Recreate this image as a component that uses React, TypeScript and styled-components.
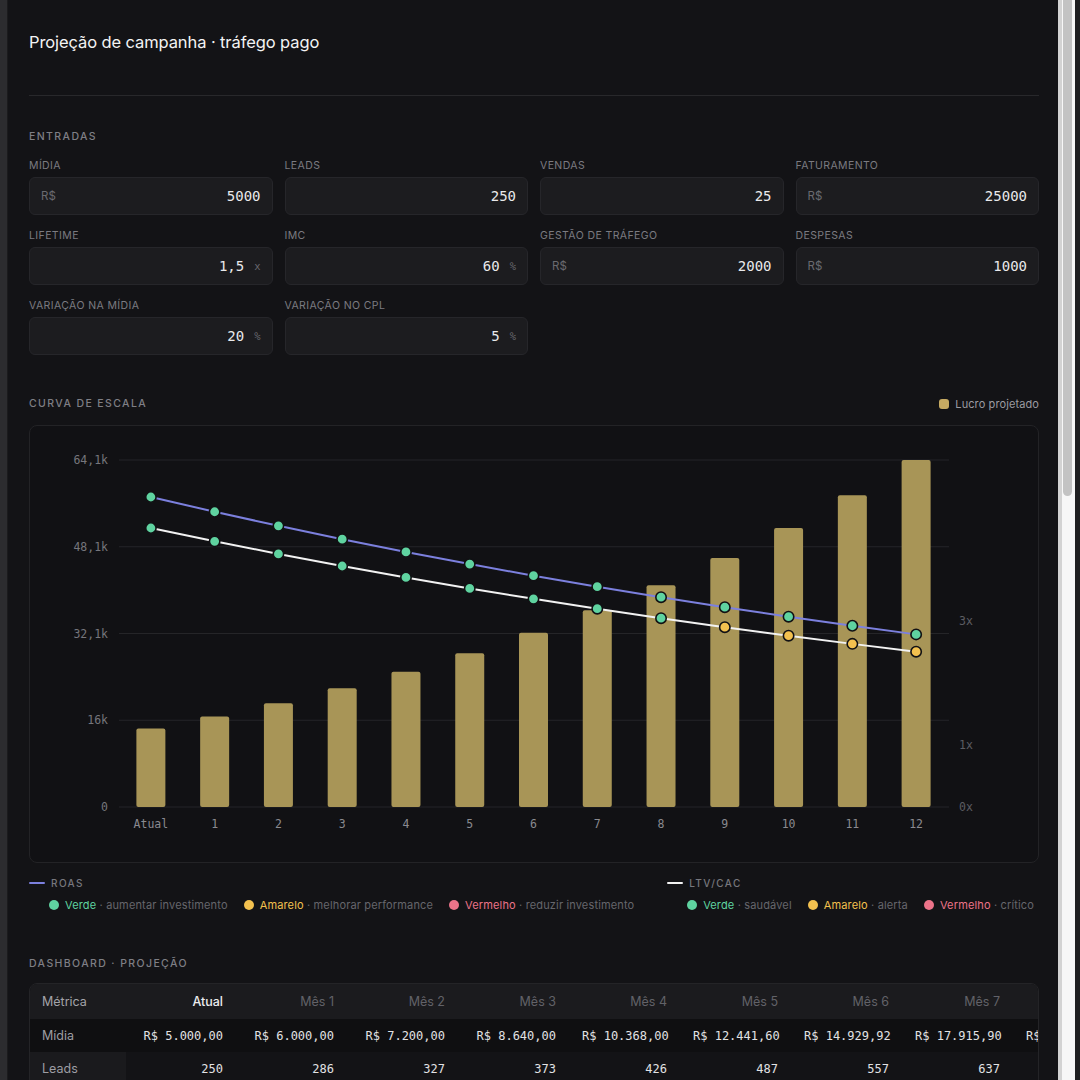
import React from 'react'
import styled, { createGlobalStyle } from 'styled-components'

const SANS = `Inter, 'Liberation Sans', sans-serif`
const MONO = `'DejaVu Sans Mono', 'Liberation Mono', monospace`

const GREEN = '#5fd3a0'
const YELLOW = '#f3c14f'
const RED = '#ec7389'
const BLUE = '#7c80de'
const GOLD = '#a89557'

const GlobalStyle = createGlobalStyle`
  html, body {
    margin: 0;
    padding: 0;
    overflow: hidden;
    background: #2b2b2e;
  }
  body {
    font-family: ${SANS};
  }
  * {
    box-sizing: border-box;
  }
`

// base inputs
const inputs = {
  midia: 5000,
  leads: 250,
  vendas: 25,
  faturamento: 25000,
  lifetime: 1.5,
  imc: 60,
  gestao: 2000,
  despesas: 1000,
  varMidia: 20,
  varCpl: 5,
}

type Month = {
  label: string
  midia: number
  leads: number
  cpl: number
  vendas: number
  faturamento: number
  lucro: number
  roas: number
  ltvCac: number
}

function project(): Month[] {
  const cpl0 = inputs.midia / inputs.leads
  const conv = inputs.vendas / inputs.leads
  const ticket = inputs.faturamento / inputs.vendas
  const ltv = ticket * inputs.lifetime * (inputs.imc / 100)
  const out: Month[] = []
  for (let n = 0; n <= 12; n++) {
    const midia = inputs.midia * Math.pow(1 + inputs.varMidia / 100, n)
    const cpl = cpl0 * Math.pow(1 + inputs.varCpl / 100, n)
    const leads = midia / cpl
    const vendas = leads * conv
    const faturamento = vendas * ticket
    const lucro = faturamento * inputs.lifetime * (inputs.imc / 100) - midia - inputs.gestao - inputs.despesas
    out.push({
      label: n === 0 ? 'Atual' : String(n),
      midia,
      leads,
      cpl,
      vendas,
      faturamento,
      lucro,
      roas: faturamento / midia,
      ltvCac: ltv / (midia / vendas),
    })
  }
  return out
}

const months = project()
const tableMonths = months.slice(0, 9)

function brNumber(v: number, digits: number) {
  const [int, dec] = v.toFixed(digits).split('.')
  const grouped = int.replace(/\B(?=(\d{3})+(?!\d))/g, '.')
  return dec ? `${grouped},${dec}` : grouped
}
const brl = (v: number) => `R$ ${brNumber(v, 2)}`
const kLabel = (v: number) => {
  if (v === 0) return '0'
  const s = (v / 1000).toFixed(1).replace('.', ',')
  return (s.endsWith(',0') ? s.slice(0, -2) : s) + 'k'
}

const roasTone = (v: number) => (v >= 2.5 ? GREEN : v >= 1 ? YELLOW : RED)
const ltvTone = (v: number) => (v >= 3 ? GREEN : v >= 1 ? YELLOW : RED)

/* ---------- frame ---------- */

const Frame = styled.div`
  display: flex;
  width: 1080px;
  height: 1080px;
  overflow: hidden;
`
const Gutter = styled.div`
  width: 8px;
  flex-shrink: 0;
  background: #2c2c2f;
  border-right: 1px solid #1b1b1d;
`
const Panel = styled.main`
  flex: 1;
  min-width: 0;
  background: #131316;
  padding: 0 19px 0 21px;
  color: #ededef;
`
const Scrollbar = styled.div`
  width: 22px;
  flex-shrink: 0;
  display: flex;
  background: #f7f7f7;
  border-left: 4px solid #d3d3d3;
  border-right: 5px solid #1f1f21;
`
const Thumb = styled.div`
  margin-left: 1px;
  width: 9px;
  height: 496px;
  background: #c3c3c3;
  border-radius: 0 0 5px 5px;
`

/* ---------- header ---------- */

const Header = styled.header`
  height: 96px;
  padding-top: 31px;
  border-bottom: 1px solid #28282b;
`
const Title = styled.h1`
  margin: 0;
  font-size: 16.5px;
  line-height: 22px;
  font-weight: 400;
  color: #f3f3f4;
  letter-spacing: -0.1px;
`

/* ---------- sections ---------- */

const Section = styled.section<{ $top: number }>`
  margin-top: ${(p) => p.$top}px;
`
const SectionHead = styled.div<{ $gap: number }>`
  display: flex;
  align-items: center;
  justify-content: space-between;
  height: 14px;
  margin-bottom: ${(p) => p.$gap}px;
`
const SectionTitle = styled.h2`
  margin: 0;
  font-size: 10.5px;
  line-height: 14px;
  font-weight: 500;
  letter-spacing: 1.4px;
  text-transform: uppercase;
  color: #7f7f85;
`

/* ---------- inputs ---------- */

const FieldGrid = styled.div`
  display: grid;
  grid-template-columns: repeat(4, 1fr);
  column-gap: 12px;
  row-gap: 15px;
`
const Field = styled.label`
  display: flex;
  flex-direction: column;
  gap: 5px;
`
const FieldLabel = styled.span`
  font-size: 10.5px;
  line-height: 12px;
  letter-spacing: 0.4px;
  text-transform: uppercase;
  color: #7b7b81;
`
const InputBox = styled.div`
  height: 38px;
  display: flex;
  align-items: center;
  padding: 0 11px;
  background: #1c1c1f;
  border: 1px solid #26262a;
  border-radius: 6px;
`
const Prefix = styled.span`
  font-size: 11.5px;
  color: #6a6a70;
`
const Value = styled.span`
  flex: 1;
  text-align: right;
  font-family: ${MONO};
  font-size: 14px;
  color: #e9e9eb;
`
const Suffix = styled.span`
  margin-left: 10px;
  font-family: ${MONO};
  font-size: 10.5px;
  color: #68686e;
`

type FieldDef = { label: string; value: string; prefix?: string; suffix?: string }

const fields: FieldDef[] = [
  { label: 'Mídia', value: '5000', prefix: 'R$' },
  { label: 'Leads', value: '250' },
  { label: 'Vendas', value: '25' },
  { label: 'Faturamento', value: '25000', prefix: 'R$' },
  { label: 'Lifetime', value: '1,5', suffix: 'x' },
  { label: 'IMC', value: '60', suffix: '%' },
  { label: 'Gestão de tráfego', value: '2000', prefix: 'R$' },
  { label: 'Despesas', value: '1000', prefix: 'R$' },
  { label: 'Variação na mídia', value: '20', suffix: '%' },
  { label: 'Variação no CPL', value: '5', suffix: '%' },
]

/* ---------- chart ---------- */

const LucroLegend = styled.div`
  display: flex;
  align-items: center;
  gap: 6px;
  font-size: 11px;
  letter-spacing: 0.1px;
  color: #9b9ba1;
`
const LucroSwatch = styled.span`
  width: 10px;
  height: 10px;
  border-radius: 3px;
  background: #c6aa62;
`
const ChartCard = styled.div`
  height: 438px;
  background: #111114;
  border: 1px solid #232326;
  border-radius: 8px;
  overflow: hidden;

  svg {
    display: block;
  }
`
const AxisText = styled.text<{ $tone: string }>`
  font-family: ${MONO};
  font-size: 11.5px;
  fill: ${(p) => p.$tone};
`

const W = 1008
const H = 436
const PL = 89
const PR = 918
const PT = 34
const PB = 381
const BAND = (PR - PL) / 13
const BAR_W = 29
const LEFT_MAX = Math.max(...months.map((m) => m.lucro))
const RIGHT_PX = 62

const xAt = (i: number) => PL + BAND * i + BAND / 2
const yLeft = (v: number) => PB - (v / LEFT_MAX) * (PB - PT)
const yRight = (v: number) => PB - v * RIGHT_PX

function ScaleChart() {
  const ticks = [0, 1, 2, 3, 4].map((k) => (LEFT_MAX * k) / 4)
  const roasPts = months.map((m, i) => `${xAt(i)},${yRight(m.roas)}`).join(' ')
  const ltvPts = months.map((m, i) => `${xAt(i)},${yRight(m.ltvCac)}`).join(' ')
  return (
    <svg width="100%" height="100%" viewBox={`0 0 ${W} ${H}`}>
      {ticks.map((t, i) => (
        <g key={i}>
          <line x1={PL} x2={PR + 1} y1={yLeft(t)} y2={yLeft(t)} stroke="#252528" strokeWidth={1} />
          <AxisText $tone="#76767c" x={78} y={yLeft(t) + 4} textAnchor="end">
            {kLabel(t)}
          </AxisText>
        </g>
      ))}
      {[0, 1, 3].map((r) => (
        <AxisText key={r} $tone="#5c5c62" x={929} y={yRight(r) + 4}>
          {r}x
        </AxisText>
      ))}
      {months.map((m, i) => {
        const top = yLeft(m.lucro)
        return (
          <rect key={i} x={xAt(i) - BAR_W / 2} y={top} width={BAR_W} height={PB - top} rx={2} fill={GOLD} />
        )
      })}
      {months.map((m, i) => (
        <AxisText key={i} $tone="#8a8a90" x={xAt(i)} y={402} textAnchor="middle">
          {m.label}
        </AxisText>
      ))}
      <polyline points={roasPts} fill="none" stroke={BLUE} strokeWidth={2} />
      <polyline points={ltvPts} fill="none" stroke="#f2f2f2" strokeWidth={2} />
      {months.map((m, i) => (
        <circle key={'r' + i} cx={xAt(i)} cy={yRight(m.roas)} r={5.2} fill={roasTone(m.roas)} stroke="#111114" strokeWidth={1.6} />
      ))}
      {months.map((m, i) => (
        <circle key={'l' + i} cx={xAt(i)} cy={yRight(m.ltvCac)} r={5.2} fill={ltvTone(m.ltvCac)} stroke="#111114" strokeWidth={1.6} />
      ))}
    </svg>
  )
}

/* ---------- legend ---------- */

const LegendRow = styled.div`
  display: flex;
  justify-content: space-between;
  margin-top: 13px;
  padding-right: 5px;
`
const LegendGroup = styled.div`
  display: flex;
  flex-direction: column;
  gap: 8px;
`
const LegendTitle = styled.div`
  display: flex;
  align-items: center;
  gap: 6px;
  font-size: 10px;
  line-height: 14px;
  font-weight: 500;
  letter-spacing: 1.4px;
  color: #77777d;
`
const LineSwatch = styled.span<{ $color: string }>`
  width: 16px;
  height: 2px;
  border-radius: 1px;
  background: ${(p) => p.$color};
`
const LegendItems = styled.div`
  display: flex;
  gap: 16px;
  padding-left: 20px;
  font-size: 11px;
  line-height: 14px;
  letter-spacing: 0.15px;
`
const LegendItem = styled.span`
  display: flex;
  align-items: center;
  gap: 6px;
  color: #66666c;
  white-space: nowrap;
`
const Dot = styled.span<{ $color: string }>`
  width: 10px;
  height: 10px;
  border-radius: 50%;
  background: ${(p) => p.$color};
`
const Tone = styled.span<{ $color: string }>`
  color: ${(p) => p.$color};
`

type LegendEntry = { color: string; name: string; desc: string }

function Legend({ title, line, items }: { title: string; line: string; items: LegendEntry[] }) {
  return (
    <LegendGroup>
      <LegendTitle>
        <LineSwatch $color={line} />
        {title}
      </LegendTitle>
      <LegendItems>
        {items.map((it) => (
          <LegendItem key={it.name}>
            <Dot $color={it.color} />
            <span>
              <Tone $color={it.color}>{it.name}</Tone> · {it.desc}
            </span>
          </LegendItem>
        ))}
      </LegendItems>
    </LegendGroup>
  )
}

/* ---------- table ---------- */

const TableWrap = styled.div`
  background: #131316;
  border: 1px solid #242427;
  border-radius: 8px;
  overflow: hidden;
`
const Table = styled.table`
  border-collapse: collapse;
  table-layout: fixed;
  width: ${96 + 9 * 111}px;
`
const Th = styled.th<{ $first?: boolean; $active?: boolean }>`
  height: 35px;
  padding: 0 14px 0 12px;
  background: #1b1b1e;
  font-family: ${SANS};
  font-size: 12.5px;
  font-weight: ${(p) => (p.$active ? 500 : 400)};
  text-align: ${(p) => (p.$first ? 'left' : 'right')};
  color: ${(p) => (p.$first ? '#a3a3a9' : p.$active ? '#ececee' : '#626268')};
  white-space: nowrap;
`
const Tr = styled.tr<{ $dark: boolean }>`
  background: ${(p) => (p.$dark ? '#0f0f11' : '#131316')};
`
const RowHead = styled.td<{ $dark: boolean }>`
  height: 33px;
  padding: 0 12px;
  background: ${(p) => (p.$dark ? '#0f0f11' : '#1a1a1d')};
  font-size: 12.5px;
  color: #9d9da3;
  white-space: nowrap;
`
const Td = styled.td`
  height: 33px;
  padding: 0 14px 0 12px;
  text-align: right;
  font-family: ${MONO};
  font-size: 12px;
  color: #e2e2e4;
  white-space: nowrap;
`

const rows: { label: string; fmt: (m: Month) => string }[] = [
  { label: 'Mídia', fmt: (m) => brl(m.midia) },
  { label: 'Leads', fmt: (m) => String(Math.round(m.leads)) },
  { label: 'CPL', fmt: (m) => brl(m.cpl) },
  { label: 'Vendas', fmt: (m) => String(Math.round(m.vendas)) },
  { label: 'Faturamento', fmt: (m) => brl(m.faturamento) },
  { label: 'Lucro', fmt: (m) => brl(m.lucro) },
  { label: 'ROAS', fmt: (m) => brNumber(m.roas, 2) + 'x' },
  { label: 'LTV/CAC', fmt: (m) => brNumber(m.ltvCac, 2) + 'x' },
]

export default function App() {
  return (
    <Frame>
      <GlobalStyle />
      <Gutter />
      <Panel>
        <Header>
          <Title>Projeção de campanha · tráfego pago</Title>
        </Header>

        <Section $top={34}>
          <SectionHead $gap={16}>
            <SectionTitle>Entradas</SectionTitle>
          </SectionHead>
          <FieldGrid>
            {fields.map((f) => (
              <Field key={f.label}>
                <FieldLabel>{f.label}</FieldLabel>
                <InputBox>
                  {f.prefix && <Prefix>{f.prefix}</Prefix>}
                  <Value>{f.value}</Value>
                  {f.suffix && <Suffix>{f.suffix}</Suffix>}
                </InputBox>
              </Field>
            ))}
          </FieldGrid>
        </Section>

        <Section $top={42}>
          <SectionHead $gap={14}>
            <SectionTitle>Curva de escala</SectionTitle>
            <LucroLegend>
              <LucroSwatch />
              Lucro projetado
            </LucroLegend>
          </SectionHead>
          <ChartCard>
            <ScaleChart />
          </ChartCard>
          <LegendRow>
            <Legend
              title="ROAS"
              line={BLUE}
              items={[
                { color: GREEN, name: 'Verde', desc: 'aumentar investimento' },
                { color: YELLOW, name: 'Amarelo', desc: 'melhorar performance' },
                { color: RED, name: 'Vermelho', desc: 'reduzir investimento' },
              ]}
            />
            <Legend
              title="LTV/CAC"
              line="#f2f2f2"
              items={[
                { color: GREEN, name: 'Verde', desc: 'saudável' },
                { color: YELLOW, name: 'Amarelo', desc: 'alerta' },
                { color: RED, name: 'Vermelho', desc: 'crítico' },
              ]}
            />
          </LegendRow>
        </Section>

        <Section $top={45}>
          <SectionHead $gap={12}>
            <SectionTitle>Dashboard · Projeção</SectionTitle>
          </SectionHead>
          <TableWrap>
            <Table>
              <colgroup>
                <col style={{ width: 96 }} />
                {tableMonths.map((m) => (
                  <col key={m.label} style={{ width: 111 }} />
                ))}
              </colgroup>
              <thead>
                <tr>
                  <Th $first>Métrica</Th>
                  {tableMonths.map((m, i) => (
                    <Th key={m.label} $active={i === 0}>
                      {i === 0 ? 'Atual' : `Mês ${i}`}
                    </Th>
                  ))}
                </tr>
              </thead>
              <tbody>
                {rows.map((r, ri) => (
                  <Tr key={r.label} $dark={ri % 2 === 0}>
                    <RowHead $dark={ri % 2 === 0}>{r.label}</RowHead>
                    {tableMonths.map((m) => (
                      <Td key={m.label}>{r.fmt(m)}</Td>
                    ))}
                  </Tr>
                ))}
              </tbody>
            </Table>
          </TableWrap>
        </Section>
      </Panel>
      <Scrollbar>
        <Thumb />
      </Scrollbar>
    </Frame>
  )
}
